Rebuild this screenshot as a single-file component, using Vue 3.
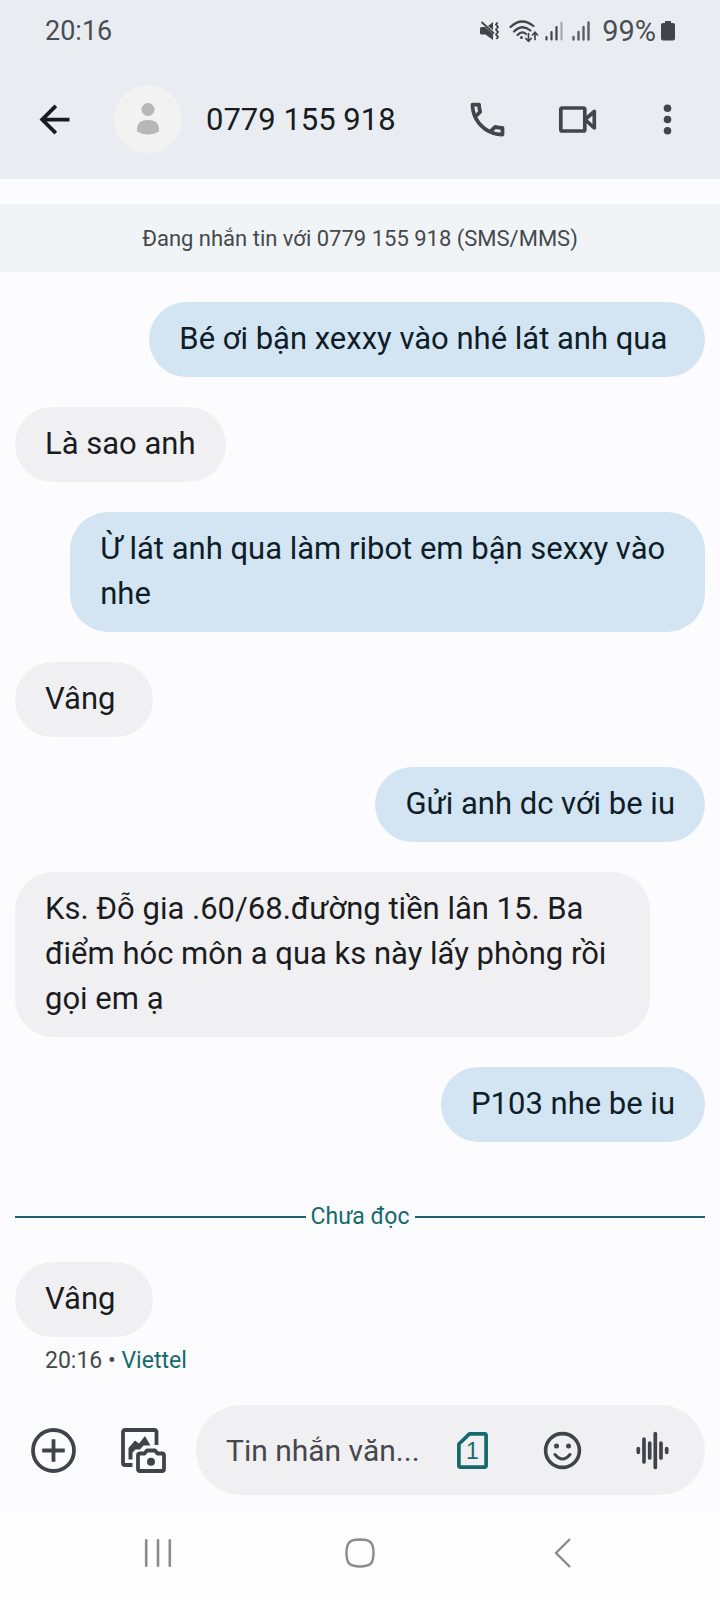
<script setup>
import { ref } from 'vue'

const draft = ref('')

// Messages are shown exactly as typed, trailing spaces included.
const earlier = [
  { id: 1, mine: true, text: 'Bé ơi bận xexxy vào nhé lát anh qua ' },
  { id: 2, mine: false, text: 'Là sao anh' },
  { id: 3, mine: true, text: 'Ừ lát anh qua làm ribot em bận sexxy vào nhe' },
  { id: 4, mine: false, text: 'Vâng ' },
  { id: 5, mine: true, text: 'Gửi anh dc với be iu' },
  { id: 6, mine: false, text: 'Ks. Đỗ gia .60/68.đường tiền lân 15. Ba điểm hóc môn a qua ks này lấy phòng rồi gọi em ạ' },
  { id: 7, mine: true, text: 'P103 nhe be iu' },
]

const unread = [{ id: 8, mine: false, text: 'Vâng ' }]
</script>

<template>
  <div class="screen">
    <header class="top">
      <div class="status">
        <span class="clock">20:16</span>
        <div class="indicators">
          <svg class="mute" width="20" height="20" viewBox="0 0 20 20" aria-hidden="true">
            <path d="M0 7.500Q0 6 1.500 6H5L13 13V19L5.500 13.500H1.500Q0 13.500 0 12ZM8 5L13 1V9Z" fill="#414549" />
            <path d="M1.500 1L14 12.500" stroke="#414549" stroke-width="1.800" />
            <path d="M17.500 1.500l-1.500 2l2 2.500l-2 2.500l2 2.500l-2 2.500l2 2.500l-1.500 2" fill="none" stroke="#414549" stroke-width="2" stroke-linejoin="round" />
          </svg>
          <svg class="wifi" width="30" height="23" viewBox="0 0 30 23" aria-hidden="true">
            <g fill="none" stroke="#414549" stroke-width="2.200" stroke-linecap="round">
              <path d="M1.500 7Q12.500 -3.500 24.500 6" />
              <path d="M5 11.500Q13 3.500 21.500 10.500" />
              <path d="M8.500 15Q13 10.500 17 14" />
              <path d="M19.500 13.500V21M16.800 18.500L19.500 21.300L22.200 18.500M26 19.500V12.500M23.500 15L26 12.300L28.500 15" stroke-width="1.700" />
            </g>
            <circle cx="12.500" cy="17.500" r="1.500" fill="#414549" />
          </svg>
          <svg class="signal" width="18" height="20" viewBox="0 0 18 20" aria-hidden="true">
            <g stroke="#414549" stroke-width="2.200" stroke-linecap="round">
              <path d="M1.500 16V18.500M6.500 11V18.500M11.500 6V18.500" />
              <path d="M16.500 1.500V18.500" opacity="0.400" />
            </g>
          </svg>
          <svg class="signal" width="18" height="20" viewBox="0 0 18 20" aria-hidden="true">
            <path d="M1.500 16V18.500M6.500 11V18.500M11.500 6V18.500M16.500 1.500V18.500" stroke="#5b5f63" stroke-width="2.400" stroke-linecap="round" />
          </svg>
          <span class="percent">99%</span>
          <svg width="14" height="20" viewBox="0 0 14 20" aria-hidden="true">
            <path d="M4 0H10V2H12Q14 2 14 4V17.500Q14 19.500 12 19.500H2Q0 19.500 0 17.500V4Q0 2 2 2H4Z" fill="#414549" />
          </svg>
        </div>
      </div>
      <div class="toolbar">
        <button type="button" class="icon back" aria-label="Quay lại">
          <svg width="45" height="45" viewBox="0 0 24 24"><path d="M20 11H7.830l5.590-5.590L12 4l-8 8 8 8 1.410-1.410L7.830 13H20v-2z" fill="#171c1f" /></svg>
        </button>
        <svg class="avatar" width="68" height="68" viewBox="0 0 68 68" aria-hidden="true">
          <circle cx="34" cy="34" r="34" fill="#f2f2f2" />
          <circle cx="34" cy="24.500" r="6.500" fill="#b7b7b7" />
          <path d="M23 44Q23 35 34 35T45 44V46.500Q40 49.500 34 49.500T23 46.500Z" fill="#b7b7b7" />
        </svg>
        <h1>0779 155 918</h1>
        <button type="button" class="icon" aria-label="Gọi">
          <svg width="45" height="45" viewBox="0 0 24 24"><path fill="#40474b" d="M6.540 5c.06.89.21 1.760.45 2.590l-1.200 1.200c-.41-1.200-.67-2.470-.76-3.790h1.510m9.860 12.020c.85.24 1.720.39 2.600.45v1.490c-1.320-.09-2.590-.35-3.800-.75l1.200-1.190M7.500 3H4c-.55 0-1 .45-1 1 0 9.390 7.610 17 17 17 .55 0 1-.45 1-1v-3.490c0-.55-.45-1-1-1-1.240 0-2.450-.2-3.570-.57a.84.84 0 0 0-.31-.05c-.26 0-.51.1-.71.29l-2.200 2.200a15.149 15.149 0 0 1-6.590-6.590l2.200-2.200c.28-.28.36-.67.25-1.020A11.360 11.360 0 0 1 8.500 4c0-.55-.45-1-1-1z" /></svg>
        </button>
        <button type="button" class="icon" aria-label="Gọi video">
          <svg width="45" height="45" viewBox="0 0 45 45" fill="none" stroke="#40474b" stroke-width="3.700" stroke-linejoin="round">
            <rect x="5.800" y="11" width="24" height="23" rx="1.500" />
            <path d="M30 22.500L39.300 14.500V31Z" />
          </svg>
        </button>
        <button type="button" class="icon" aria-label="Tùy chọn khác">
          <svg width="45" height="45" viewBox="0 0 45 45" fill="#40474b">
            <circle cx="22.500" cy="11.300" r="3.800" /><circle cx="22.500" cy="22.500" r="3.800" /><circle cx="22.500" cy="33.700" r="3.800" />
          </svg>
        </button>
      </div>
    </header>

    <main class="thread">
      <p class="notice">Đang nhắn tin với 0779 155 918 (SMS/MMS)</p>
      <div class="messages">
        <p v-for="m in earlier" :key="m.id" class="bubble" :class="{ mine: m.mine }">{{ m.text }}</p>
        <div class="divider"><span>Chưa đọc</span></div>
        <p v-for="m in unread" :key="m.id" class="bubble" :class="{ mine: m.mine }">{{ m.text }}</p>
      </div>
      <p class="meta">20:16 • <span>Viettel</span></p>
    </main>

    <form class="composer" @submit.prevent>
      <button type="button" class="icon" aria-label="Thêm">
        <svg width="45" height="45" viewBox="0 0 45 45" fill="none" stroke="#40444a" stroke-width="3.800">
          <circle cx="22.500" cy="22.500" r="20.500" /><path d="M22.500 11.200V33.800M11.200 22.500H33.800" />
        </svg>
      </button>
      <button type="button" class="icon gallery" aria-label="Ảnh và máy ảnh">
        <svg width="45" height="45" viewBox="0 0 45 45" fill="none" stroke="#40444a" stroke-width="3.800" stroke-linejoin="round">
          <path d="M35.500 17V4Q35.500 2 33.500 2H4Q2 2 2 4V35Q2 37 4 37H11.500" />
          <path d="M17 27.500Q17 25.500 19 25.500H23.500L26 22.500H34L36.500 25.500H41Q43 25.500 43 27.500V41Q43 43 41 43H19Q17 43 17 41Z" />
          <path d="M7.500 31.500V20L14 12.500L18 15.500L24 8L29.500 17.500H22.500L19 21.500H14.500L11.500 24.500V31.500Z" fill="#40444a" stroke="none" />
          <circle cx="30" cy="33.800" r="4" fill="#40444a" stroke="none" />
        </svg>
      </button>
      <div class="field">
        <input v-model="draft" type="text" placeholder="Tin nhắn văn..." aria-label="Tin nhắn văn bản" />
        <button type="button" class="icon" aria-label="SIM 1">
          <svg width="45" height="45" viewBox="0 0 45 45" fill="none">
            <path d="M8.900 16L19.500 5.800H34.500Q36.100 5.800 36.100 7.400V37.600Q36.100 39.200 34.500 39.200H10.500Q8.900 39.200 8.900 37.600Z" stroke="#14696d" stroke-width="3.700" stroke-linejoin="round" />
            <text x="22.500" y="31" class="sim" text-anchor="middle" fill="#14696d">1</text>
          </svg>
        </button>
        <button type="button" class="icon" aria-label="Biểu tượng cảm xúc">
          <svg width="45" height="45" viewBox="0 0 45 45" fill="none" stroke="#40444a" stroke-width="3.600">
            <circle cx="22.500" cy="22.500" r="16.900" />
            <path d="M15 26.500Q22.500 35.500 30 26.500" stroke-width="3" stroke-linecap="round" />
            <g fill="#40444a" stroke="none"><circle cx="16.500" cy="18" r="2.500" /><circle cx="28.500" cy="18" r="2.500" /></g>
          </svg>
        </button>
        <button type="button" class="icon" aria-label="Ghi âm">
          <svg width="45" height="45" viewBox="0 0 45 45" fill="none" stroke="#40444a" stroke-width="3.700" stroke-linecap="round">
            <path d="M8.300 20.700V24.300M14 11V34M19.700 15V30M25.300 5.500V39.500M31 15V30M36.700 20.700V24.300" />
          </svg>
        </button>
      </div>
    </form>

    <nav class="system">
      <button type="button" class="key" aria-label="Gần đây">
        <svg width="30" height="30" viewBox="0 0 30 30" stroke="#8b8b8b" stroke-width="2.600" stroke-linecap="round"><path d="M3.200 2.200V27.800M15 2.200V27.800M26.800 2.200V27.800" /></svg>
      </button>
      <button type="button" class="key" aria-label="Màn hình chính">
        <svg width="30" height="30" viewBox="0 0 30 30" fill="none" stroke="#8b8b8b" stroke-width="2.400"><path d="M15 1.500C25.500 1.500 28.500 4.500 28.500 15S25.500 28.500 15 28.500S1.500 25.500 1.500 15S4.500 1.500 15 1.500Z" /></svg>
      </button>
      <button type="button" class="key" aria-label="Trở về">
        <svg width="30" height="30" viewBox="0 0 30 30" fill="none" stroke="#8b8b8b" stroke-width="2.400"><path d="M23 1L9 15L23 29" /></svg>
      </button>
    </nav>
  </div>
</template>

<style>
body {
  margin: 0;
}
</style>

<style scoped>
.screen {
  display: flex;
  flex-direction: column;
  min-height: 100vh;
  background: #fcfcfe;
  color: #1b1c1f;
  font-family: Roboto, "Noto Sans", sans-serif;
}

p,
h1 {
  margin: 0;
  font-weight: 400;
}

svg {
  display: block;
  flex: none;
}

button {
  padding: 0;
  border: 0;
  background: none;
  cursor: pointer;
}

.icon {
  flex: none;
}

.top {
  background: #e9edf1;
}

.status {
  display: flex;
  align-items: center;
  justify-content: space-between;
  height: 62px;
  padding: 0 45px;
  color: #4a4d51;
  font-size: 27px;
}

.indicators {
  display: flex;
  align-items: center;
}

.mute,
.signal {
  margin-right: 9px;
}

.wifi {
  margin-right: 6px;
}

.percent {
  margin: 0 5px 0 3px;
  font-size: 29px;
}

.toolbar {
  display: flex;
  align-items: center;
  gap: 45px;
  padding: 23px 30px 26px 32px;
}

.back {
  margin-right: -8px;
}

.avatar {
  margin-right: -21px;
}

h1 {
  flex: 1;
  color: #171c1f;
  font-size: 31px;
  line-height: 45px;
  white-space: nowrap;
}

.thread {
  flex: 1;
  padding-top: 25px;
}

.notice {
  padding: 20px 15px 18px;
  background: #f0f4f7;
  color: #45484c;
  font-size: 22px;
  line-height: 30px;
  text-align: center;
}

.messages {
  display: flex;
  flex-direction: column;
  align-items: flex-start;
  gap: 30px;
  padding: 30px 15px 0;
}

.bubble {
  box-sizing: border-box;
  max-width: 92%;
  padding: 14px 30px 16px;
  border-radius: 38px;
  background: #f0f0f2;
  font-size: 31px;
  line-height: 45px;
  white-space: pre-wrap;
}

.mine {
  align-self: flex-end;
  background: #d3e5f2;
  color: #0e1d28;
}

.divider {
  display: flex;
  align-items: center;
  align-self: stretch;
  gap: 5px;
  margin-top: 30px;
  color: #14696d;
  font-size: 23px;
  line-height: 30px;
}

.divider::before,
.divider::after {
  flex: 1;
  height: 2px;
  background: #1f6070;
  content: "";
}

.meta {
  padding: 9px 45px 29px;
  color: #45484c;
  font-size: 23px;
  line-height: 30px;
}

.meta span {
  color: #14696d;
}

.composer {
  display: flex;
  align-items: center;
  gap: 45px;
  padding: 0 15px 16px 31px;
}

.gallery {
  margin-right: -15px;
}

.field {
  display: flex;
  flex: 1;
  align-items: center;
  gap: 45px;
  min-width: 0;
  height: 90px;
  padding: 0 30px;
  border-radius: 45px;
  background: #f0f0f2;
}

input {
  flex: 1;
  min-width: 0;
  margin-right: -25px;
  padding: 0;
  border: 0;
  outline: 0;
  background: none;
  color: #1b1c1f;
  font: inherit;
  font-size: 30px;
  line-height: 45px;
}

input::placeholder {
  color: #45484c;
  opacity: 1;
}

.sim {
  font-size: 23px;
}

.system {
  display: flex;
  align-items: center;
  justify-content: center;
  gap: 172px;
  padding: 27px 0 32px;
  background: #fefefe;
}
</style>
